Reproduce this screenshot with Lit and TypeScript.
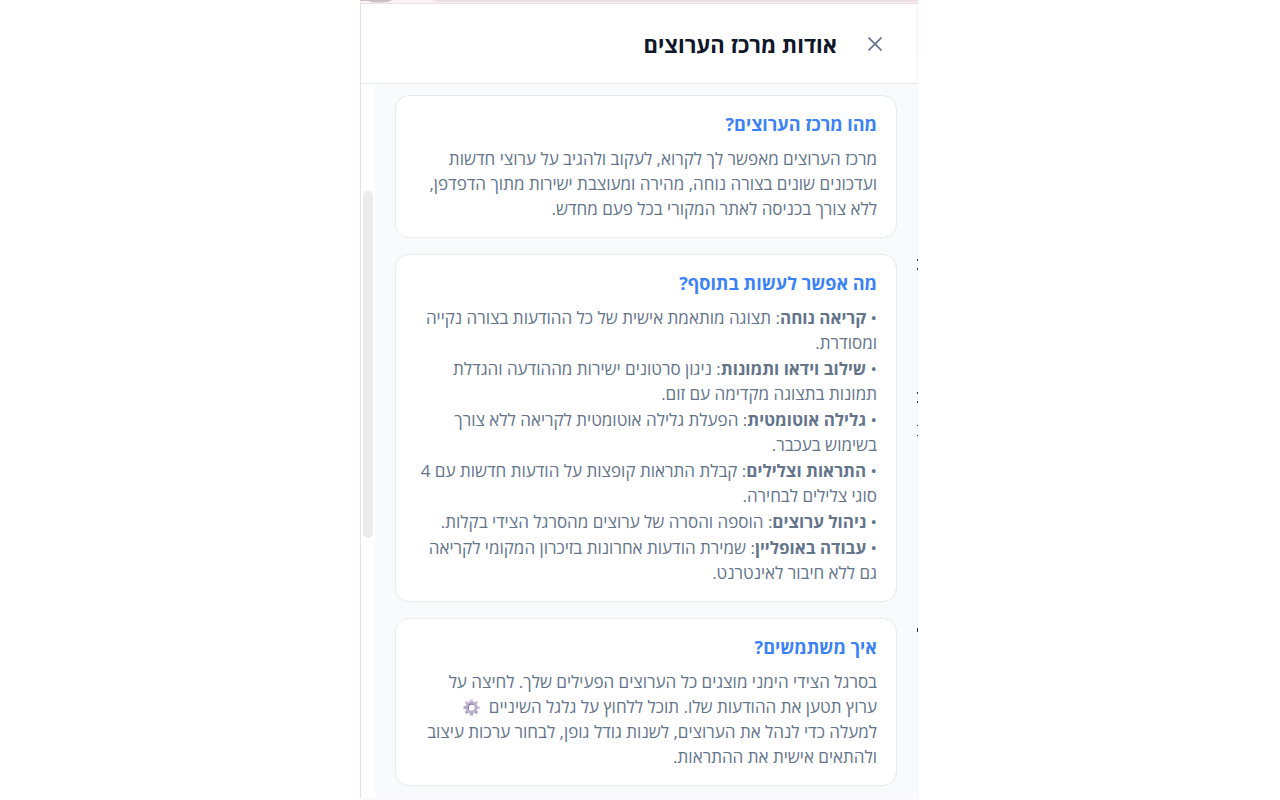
import { LitElement, html, css, svg } from "lit";
import { customElement } from "lit/decorators.js";

const features: [string, string][] = [
  ["קריאה נוחה", "תצוגה מותאמת אישית של כל ההודעות בצורה נקייה ומסודרת."],
  ["שילוב וידאו ותמונות", "ניגון סרטונים ישירות מההודעה והגדלת תמונות בתצוגה מקדימה עם זום."],
  ["גלילה אוטומטית", "הפעלת גלילה אוטומטית לקריאה ללא צורך בשימוש בעכבר."],
  ["התראות וצלילים", "קבלת התראות קופצות על הודעות חדשות עם 4 סוגי צלילים לבחירה."],
  ["ניהול ערוצים", "הוספה והסרה של ערוצים מהסרגל הצידי בקלות."],
  ["עבודה באופליין", "שמירת הודעות אחרונות בזיכרון המקומי לקריאה גם ללא חיבור לאינטרנט."],
];

const teeth = [0, 45, 90, 135, 180, 225, 270, 315];

@customElement("app-root")
export class AppRoot extends LitElement {
  static styles = css`
    :host {
      display: block;
      height: 100vh;
      background: #fff;
      font-family: "Open Sans", "Noto Sans", sans-serif;
      color: #64748b;
    }
    * { box-sizing: border-box; }
    .stage {
      max-width: 560px;
      height: 100%;
      margin: 0 auto;
      padding-right: 1px;
      display: flex;
      flex-direction: column;
      overflow: hidden;
    }
    .page-top {
      flex: none;
      height: 4px;
      margin-right: 1px;
      background:
        linear-gradient(180deg, transparent 2px, #fbf1f3 2px),
        linear-gradient(90deg, #fbf3f3 70px, #eedfe3 78px);
      border-bottom: 1px solid #f6dde1;
      overflow: hidden;
    }
    .page-top svg { display: block; }
    .middle {
      flex: 1;
      min-height: 0;
      display: flex;
      direction: ltr;
    }
    .panel {
      flex: 1;
      min-width: 0;
      border-left: 1px solid #f0dde1;
      display: flex;
      flex-direction: column;
      direction: rtl;
      background: #fff;
    }
    .edge {
      flex: none;
      width: 1px;
      margin-right: 1px;
      background: #f5f3fb;
    }
    .edge svg { display: block; }
    header {
      flex: none;
      height: 80px;
      border-bottom: 1px solid #e5e7eb;
      display: flex;
      align-items: center;
      gap: 20px;
      padding: 0 24px;
    }
    .close {
      width: 36px;
      height: 36px;
      padding: 0;
      border: 0;
      background: none;
      color: #64748b;
      display: grid;
      place-items: center;
      cursor: pointer;
    }
    h1 {
      margin: 0;
      font-size: 22px;
      line-height: 32px;
      font-weight: 700;
      color: #0f172a;
    }
    .body {
      flex: 1;
      min-height: 0;
      display: flex;
    }
    .content {
      flex: 1;
      min-width: 0;
      overflow: hidden;
      background: #f8fafc;
      padding: 11px 20px;
      display: flex;
      flex-direction: column;
      gap: 16px;
    }
    .track {
      flex: none;
      width: 14px;
      padding: 0 2px;
      display: grid;
      grid-template-rows: 107fr 347fr 260fr;
    }
    .thumb {
      grid-row: 2;
      border-radius: 5px;
      background: #ebebeb;
    }
    .card {
      flex: none;
      background: #fff;
      border: 1px solid #e8eaed;
      border-radius: 14px;
      padding: 16px 19px;
      font-size: 17px;
      line-height: 25px;
    }
    h2 {
      margin: 0 0 10px;
      font-size: 18px;
      line-height: 24px;
      font-weight: 700;
      color: #3b82f6;
    }
    p { margin: 0; }
    ul {
      margin: 0;
      padding: 0;
      list-style: none;
      display: grid;
      gap: 1px;
    }
    .gear { vertical-align: -3px; margin: 0 4px; }
    .page-bottom { flex: none; height: 2px; background: #fefafb; }
  `;

  gear() {
    return html`<svg class="gear" width="17" height="17" viewBox="0 0 16 16" role="img" aria-label="הגדרות">
      ${teeth.map(
        (a) => svg`<rect x="6.5" y="0.4" width="3" height="4" rx="0.8" fill=${a > 90 && a < 300 ? "#b5a6cb" : "#cabfda"} transform="rotate(${a} 8 8)"/>`
      )}
      <circle cx="8" cy="8" r="4.3" fill="none" stroke="#bdb0cf" stroke-width="2.8"/>
      <path d="M5.3 9.6A3.2 3.2 0 0 1 9.4 5.1" fill="none" stroke="#85739c" stroke-width="1"/>
    </svg>`;
  }

  render() {
    return html`
      <div class="stage">
        <div class="page-top">
          <svg width="40" height="3" viewBox="0 0 40 3" aria-hidden="true">
            <path d="M0 0H33Q26 3 18 2.5Q12 2.5 8 1H0Z" fill="#c9bec0"/>
          </svg>
        </div>
        <div class="middle">
          <section class="panel" dir="rtl" lang="he" aria-labelledby="title">
            <header>
              <button class="close" type="button" aria-label="סגירה">
                <svg width="14" height="14" viewBox="0 0 14 14" aria-hidden="true">
                  <path d="M0.5 0.5L13.5 13.5M13.5 0.5L0.5 13.5" fill="none" stroke="currentColor" stroke-width="1.7"/>
                </svg>
              </button>
              <h1 id="title">אודות מרכז הערוצים</h1>
            </header>
            <div class="body">
              <main class="content">
                <article class="card">
                  <h2>מהו מרכז הערוצים?</h2>
                  <p>מרכז הערוצים מאפשר לך לקרוא, לעקוב ולהגיב על ערוצי חדשות ועדכונים שונים בצורה נוחה, מהירה ומעוצבת ישירות מתוך הדפדפן, ללא צורך בכניסה לאתר המקורי בכל פעם מחדש.</p>
                </article>
                <article class="card">
                  <h2>מה אפשר לעשות בתוסף?</h2>
                  <ul>
                    ${features.map(([name, text]) => html`<li>• <b>${name}</b>: ${text}</li>`)}
                  </ul>
                </article>
                <article class="card">
                  <h2>איך משתמשים?</h2>
                  <p>בסרגל הצידי הימני מוצגים כל הערוצים הפעילים שלך. לחיצה על ערוץ תטען את ההודעות שלו. תוכל ללחוץ על גלגל השיניים ${this.gear()} למעלה כדי לנהל את הערוצים, לשנות גודל גופן, לבחור ערכות עיצוב ולהתאים אישית את ההתראות.</p>
                </article>
              </main>
              <div class="track" aria-hidden="true"><div class="thumb"></div></div>
            </div>
          </section>
          <div class="edge">
            <svg width="1" height="640" viewBox="0 0 1 640" aria-hidden="true">
              <path d="M0 0H1V52H0Z" fill="#fdf1f3"/>
              <path d="M0 255h1v2h-1zM0 264h1v2h-1zM0 388h1v2h-1zM0 397h1v2h-1zM0 421h1v1h-1zM0 431h1v1h-1zM0 624h1v4h-1z" fill="#333"/>
            </svg>
          </div>
        </div>
        <div class="page-bottom"></div>
      </div>
    `;
  }
}
